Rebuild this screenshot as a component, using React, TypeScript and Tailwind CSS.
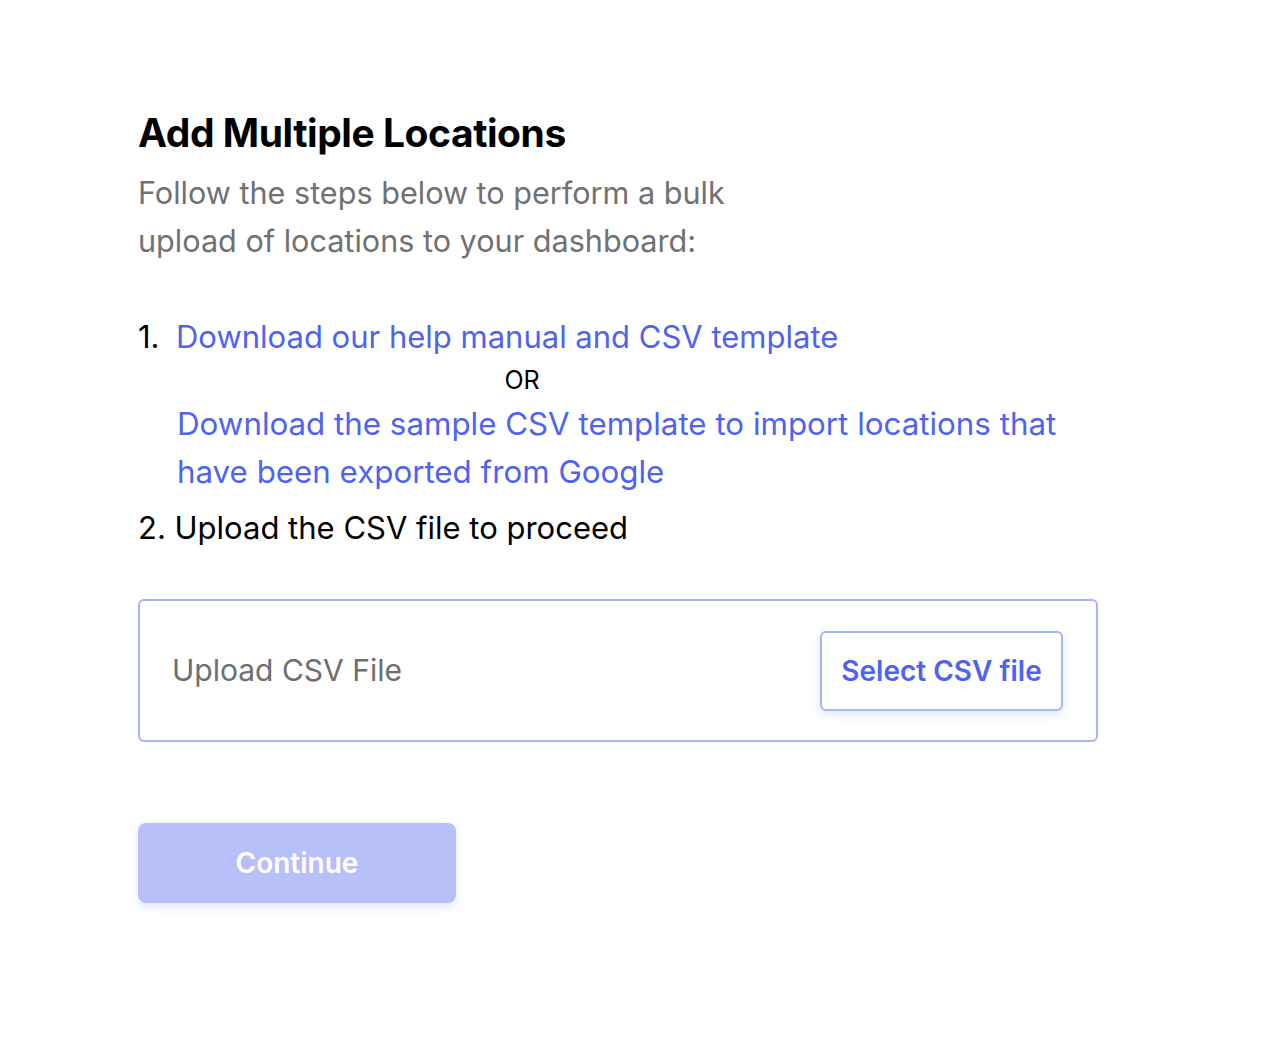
import React from "react";

const App: React.FC = () => {
  return (
    <div
      className="min-h-[1060px] w-full bg-white text-black"
      style={{ fontFamily: "Inter, 'Noto Sans', sans-serif" }}
    >
      <div className="pl-[138px] pt-[108px]">
        {/* Header */}
        <h1 className="text-[39px] font-bold leading-[50px] tracking-[-0.45px]">
          Add Multiple Locations
        </h1>
        <p className="mt-[11px] w-[640px] text-[30.6px] leading-[48px] text-[#717171]">
          Follow the steps below to perform a bulk upload of locations to your
          dashboard:
        </p>

        {/* Steps */}
        <div className="mt-[48px] w-[960px] text-[31px] leading-[48px]">
          <div className="flex">
            <span className="w-[38px]">1.</span>
            <a className="text-[#4f63f2]" href="#">
              Download our help manual and CSV template
            </a>
          </div>
          <div className="w-[768px] text-center text-[25px] leading-[39px]">
            OR
          </div>
          <a className="block w-[930px] pl-[39px] text-[31.3px] text-[#4f63f2]" href="#">
            Download the sample CSV template to import locations that have been
            exported from Google
          </a>
          <div className="mt-[8px]">2. Upload the CSV file to proceed</div>
        </div>

        {/* Upload box */}
        <div className="mt-[47px] flex h-[143px] w-[960px] items-center justify-between rounded-[6px] border-2 border-[#a9b3f7] pl-[32px] pr-[33px]">
          <span className="text-[30px] text-[#6e6e6e]">Upload CSV File</span>
          <button className="h-[80px] w-[243px] rounded-[6px] border-2 border-[#a9b3f7] bg-white text-[28px] font-semibold text-[#4f63f2] shadow-[0_4px_10px_rgba(79,99,242,0.15)]">
            Select CSV file
          </button>
        </div>

        {/* Continue */}
        <button className="mt-[81px] h-[80px] w-[318px] rounded-[8px] bg-[#b7c0f8] text-[28px] font-semibold text-white shadow-[0_4px_10px_rgba(79,99,242,0.15)]">
          Continue
        </button>
      </div>
    </div>
  );
};

export default App;
